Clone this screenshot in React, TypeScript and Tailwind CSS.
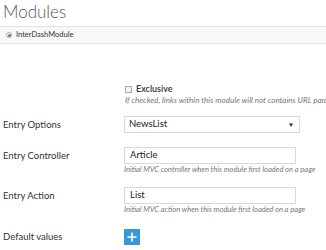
const font = { fontFamily: 'Lato, "Open Sans", sans-serif' };

function Row({ label, className, children }: { label: string; className?: string; children: React.ReactNode }) {
  return (
    <div className={"flex items-start " + (className ?? "")}>
      <div className="w-[124px] shrink-0 pl-[3px] pt-[3px] text-[9.5px] leading-[12px] text-[#333]">{label}</div>
      <div className="flex-1">{children}</div>
    </div>
  );
}

function TextInput({ value, help }: { value: string; help: string }) {
  return (
    <div>
      <div className="flex h-[17px] w-[172px] items-center border border-[#d9d9d9] bg-white pl-[5px] text-[9.5px] text-[#222]">
        {value}
      </div>
      <div className="mt-[1px] whitespace-nowrap text-[7.5px] italic leading-[10px] text-[#777]">{help}</div>
    </div>
  );
}

export default function App() {
  return (
    <div className="h-[250px] w-[326px] overflow-hidden bg-white" style={font}>
      <h1 className="pl-[3px] pt-[1px] text-[17px] font-light leading-[22px] text-[#555]">Modules</h1>
      <div className="mt-[3px] flex h-[18px] items-center border-y border-[#e3e3e3] bg-[#f8f8f8] pl-[6px]">
        <span className="mr-[4px] flex h-[6px] w-[6px] items-center justify-center rounded-full border border-[#aaa] bg-white">
          <span className="h-[3px] w-[3px] rounded-full bg-[#777]" />
        </span>
        <span className="text-[7.5px] text-[#333]">InterDashModule</span>
      </div>

      <div className="ml-[125px] mt-[39px]">
        <div className="flex items-center">
          <span className="mr-[4px] h-[7px] w-[7px] border border-[#aaa] bg-[#f2f2f2]" />
          <span className="text-[9px] font-semibold leading-[12px] text-[#333]">Exclusive</span>
        </div>
        <div className="whitespace-nowrap text-[8px] italic leading-[10px] text-[#777]">
          If checked, links within this module will not contains URL parameters
        </div>
      </div>

      <div className="mt-[11px] flex flex-col">
        <Row label="Entry Options">
          <div className="flex h-[17px] w-[176px] items-center justify-between border border-[#d9d9d9] bg-white pl-[4px] pr-[5px] text-[9.5px] text-[#222]">
            <span>NewsList</span>
            <span className="text-[6px] text-[#222]">▼</span>
          </div>
        </Row>
        <Row label="Entry Controller" className="mt-[14px]">
          <TextInput value="Article" help="Initial MVC controller when this module first loaded on a page" />
        </Row>
        <Row label="Entry Action" className="mt-[12px]">
          <TextInput value="List" help="Initial MVC action when this module first loaded on a page" />
        </Row>
        <div className="mt-[14px] flex items-center">
          <div className="w-[124px] shrink-0 pl-[3px] text-[9.5px] leading-[12px] text-[#333]">Default values</div>
          <div className="flex h-[16px] w-[16px] items-center justify-center bg-[#3a98d8]">
            <svg width="10" height="10" viewBox="0 0 10 10">
              <path d="M5 0.5v9M0.5 5h9" stroke="white" strokeWidth="1.6" />
            </svg>
          </div>
        </div>
      </div>
    </div>
  );
}
